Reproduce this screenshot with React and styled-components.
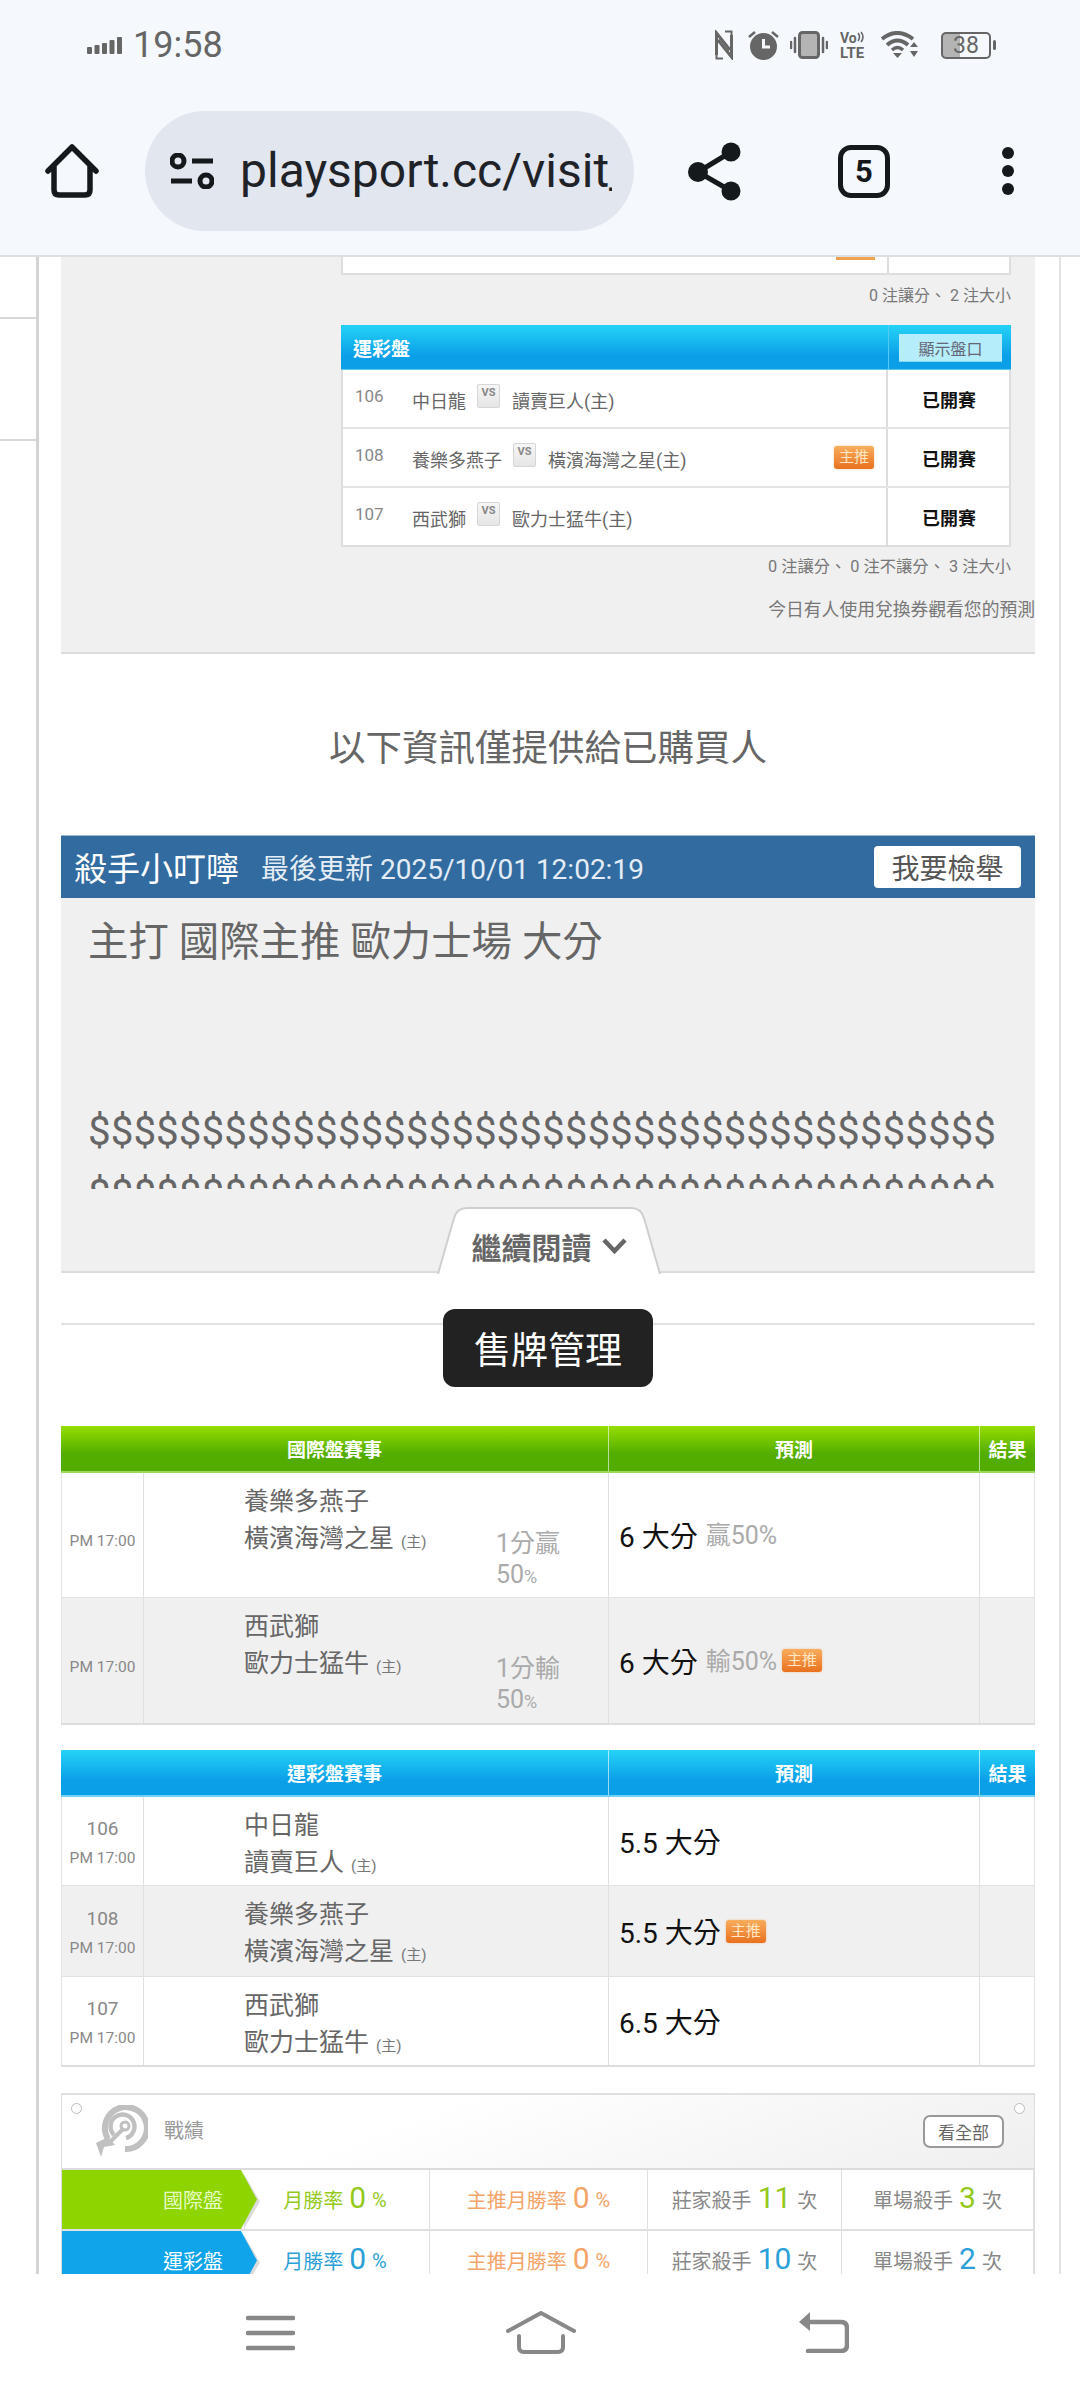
import React from 'react'
import styled, { createGlobalStyle } from 'styled-components'

const GlobalStyle = createGlobalStyle`
  html, body { margin: 0; padding: 0; background: #fff; overflow: hidden; }
  * { box-sizing: border-box; }
  body { font-family: Roboto, "Noto Sans CJK TC", sans-serif; }
`

const Screen = styled.div`
  width: 1080px;
  height: 2400px;
  display: flex;
  flex-direction: column;
  overflow: hidden;
  background: #fff;
`

/* browser chrome */
const Chrome = styled.header`
  height: 257px;
  flex: none;
  background: #f5f9fe;
  border-bottom: 2px solid #dcdfe3;
`
const StatusBar = styled.div`
  height: 90px;
  padding: 0 89px 0 87px;
  display: flex;
  align-items: center;
  color: #666;
`
const Time = styled.span`
  font-size: 36px;
  margin-left: 11px;
  line-height: 1;
`
const StatusIcons = styled.div`
  margin-left: auto;
  display: flex;
  align-items: center;
`
const Battery = styled.div`
  width: 50px;
  height: 27px;
  margin-left: 23px;
  border: 2.5px solid #666;
  border-radius: 5px;
  position: relative;
  display: flex;
  align-items: center;
  justify-content: center;
  font-size: 23px;
  background: linear-gradient(90deg, #b4b4b4 0 36%, transparent 36%);
  &::after {
    content: "";
    position: absolute;
    right: -7px;
    top: 6px;
    width: 3px;
    height: 10px;
    border-radius: 2px;
    background: #666;
  }
`
const Toolbar = styled.div`
  margin-top: 21px;
  height: 120px;
  padding-left: 45px;
  display: flex;
  align-items: center;
`
const UrlPill = styled.div`
  width: 489px;
  height: 120px;
  margin-left: 46px;
  margin-right: 54px;
  border-radius: 60px;
  background: #e1e6ef;
  padding-left: 25px;
  display: flex;
  align-items: center;
  gap: 26px;
`
const UrlText = styled.div`
  width: 372px;
  overflow: hidden;
  white-space: nowrap;
  font-size: 48px;
  line-height: 64px;
  color: #1f2328;
`
const TabCount = styled.div`
  width: 52px;
  height: 53px;
  margin-left: 97px;
  margin-right: 112px;
  border: 5px solid #15191c;
  border-radius: 13px;
  display: flex;
  align-items: center;
  justify-content: center;
  font-size: 31px;
  font-weight: 700;
  color: #15191c;
`
const Kebab = styled.div`
  width: 12px;
  display: flex;
  flex-direction: column;
  gap: 6px;
  i {
    display: block;
    width: 12px;
    height: 12px;
    border-radius: 50%;
    background: #15191c;
  }
`

/* page */
const PageArea = styled.main`
  flex: 1;
  min-height: 0;
  display: flex;
  overflow: hidden;
`
const LeftStub = styled.aside`
  width: 36px;
  flex: none;
`
const StubRow = styled.div`
  height: ${(p) => p.$h}px;
  border-bottom: 2px solid #d8d8d8;
`
const Content = styled.div`
  width: 1025px;
  flex: none;
  padding: 0 24px 0 22px;
  border-left: 3px solid #d4d4d4;
  border-right: 2px solid #e2e2e2;
  height: 100%;
  overflow: hidden;
`
const GrayPanel = styled.section`
  height: 397px;
  background: #f0f0f0;
  border-bottom: 2px solid #dcdcdc;
  padding-right: 24px;
  display: flex;
  flex-direction: column;
  align-items: flex-end;
`
const Remnant = styled.div`
  width: 670px;
  height: 18px;
  background: #fff;
  border: 2px solid #ddd;
  border-top: none;
  display: grid;
  grid-template-columns: 546px 1fr;
`
const RemnantLeft = styled.div`
  border-right: 2px solid #ddd;
  display: flex;
  justify-content: flex-end;
  padding-right: 12px;
  i {
    display: block;
    width: 39px;
    height: 3px;
    background: #f2a14e;
  }
`
const Note = styled.div`
  height: ${(p) => p.$h}px;
  margin-bottom: ${(p) => p.$mb || 0}px;
  display: flex;
  align-items: center;
  font-size: ${(p) => p.$size}px;
  color: #777;
  white-space: pre;
  ${(p) => p.$flush && 'margin-right: -24px;'}
`
const OddsTable = styled.div`
  width: 670px;
  background: #fff;
  border: 2px solid #ddd;
  border-top: none;
`
const OddsHead = styled.div`
  height: 45px;
  margin: 0 -2px;
  display: grid;
  grid-template-columns: 547px 1fr;
  background: linear-gradient(#25d3f6, #0b9fe8 70%);
  border-bottom: 1px solid #5cc8f0;
`
const OddsTitle = styled.div`
  padding-left: 12px;
  display: flex;
  align-items: center;
  font-size: 19px;
  font-weight: 700;
  color: #fff;
`
const OddsHeadRight = styled.div`
  border-left: 1px solid #55c9f2;
  padding: 9px 0 0 10px;
`
const ShowOdds = styled.div`
  width: 103px;
  height: 28px;
  background: #b5edfa;
  border-bottom: 1px solid #7fd9ef;
  color: #667;
  font-size: 16px;
  display: flex;
  align-items: center;
  justify-content: center;
`
const OddsRow = styled.div`
  height: ${(p) => (p.$last ? 57 : 59)}px;
  display: grid;
  grid-template-columns: 545px 1fr;
  border-bottom: ${(p) => (p.$last ? 'none' : '2px solid #e4e4e4')};
`
const OddsGame = styled.div`
  padding: 0 12px;
  border-right: 2px solid #ddd;
  display: flex;
  align-items: center;
  color: #666;
  font-size: 18px;
`
const OddsNo = styled.span`
  width: 57px;
  font-size: 17px;
  color: #888;
  margin-bottom: 6px;
`
const OddsTeam = styled.span`
  padding-top: 3px;
`
const VsMark = styled.span`
  width: 23px;
  height: 24px;
  margin: 0 12px 6px 11px;
  background: linear-gradient(#f6f6f6, #e6e6e6);
  border: 1px solid #d6d6d6;
  border-radius: 2px;
  color: #888;
  font-size: 11px;
  font-weight: 700;
  text-align: center;
  line-height: 15px;
`
const OddsState = styled.div`
  display: flex;
  align-items: center;
  justify-content: center;
  padding-left: 1px;
  font-size: 18px;
  font-weight: 700;
  color: #111;
`
const MainPick = styled.span`
  width: 40px;
  height: 23px;
  flex: none;
  margin-left: ${(p) => p.$ml || '8px'};
  background: linear-gradient(#f8ad5e, #e9711f);
  border-radius: 3px;
  box-shadow: 0 0 2px rgba(240, 150, 70, 0.6);
  color: #ffe6c4;
  font-size: 15px;
  line-height: 23px;
  text-align: center;
  font-weight: 400;
`
const BuyersTitle = styled.h2`
  margin: 0;
  height: 181px;
  padding-top: 2px;
  display: flex;
  align-items: center;
  justify-content: center;
  font-size: 36.5px;
  font-weight: 400;
  color: #666;
`

/* article */
const Article = styled.article`
  position: relative;
`
const ArticleHead = styled.div`
  height: 63px;
  background: #316b9f;
  border-top: 1px solid #9fbcd4;
  padding: 0 14px 0 13px;
  display: flex;
  align-items: center;
  color: #fff;
`
const Author = styled.span`
  font-size: 33px;
`
const Updated = styled.span`
  margin-left: 22px;
  font-size: 28px;
  color: #e4edf5;
`
const ReportBtn = styled.div`
  margin-left: auto;
  width: 147px;
  height: 42px;
  background: #fff;
  border-radius: 4px;
  color: #555;
  font-size: 28px;
  display: flex;
  align-items: center;
  justify-content: center;
`
const ArticleBody = styled.div`
  height: 375px;
  background: #f0f0f0;
  border-bottom: 2px solid #dcdcdc;
  padding: 13px 23px 0 27px;
`
const ArticleText = styled.div`
  height: 278px;
  overflow: hidden;
  font-size: 40.4px;
  line-height: 63px;
  color: #666;
  white-space: nowrap;
`
const ReadMore = styled.div`
  position: absolute;
  left: 376px;
  bottom: -1px;
  width: 224px;
  height: 67px;
  display: flex;
  align-items: center;
  justify-content: center;
  gap: 10px;
  padding-top: 11px;
  font-size: 30px;
  font-weight: 700;
  color: #666;
  svg.shape {
    position: absolute;
    inset: 0;
  }
  span, svg.chev {
    position: relative;
  }
`

/* sale button */
const SaleSection = styled.div`
  height: 153px;
  padding-top: 36px;
  display: flex;
  justify-content: center;
  align-items: flex-start;
  position: relative;
  &::before {
    content: "";
    position: absolute;
    left: 0;
    right: 0;
    top: 50px;
    height: 2px;
    background: #e2e2e2;
  }
`
const SaleBtn = styled.div`
  position: relative;
  width: 210px;
  height: 78px;
  background: #222;
  border-radius: 12px;
  color: #fff;
  font-size: 37px;
  display: flex;
  align-items: center;
  justify-content: center;
`

/* pick tables */
const COLS = '82px 465px 371px 56px'
const PickTable = styled.div`
  margin-bottom: ${(p) => p.$mb}px;
  border-bottom: 2px solid #dedede;
`
const PickHead = styled.div`
  height: 47px;
  display: grid;
  grid-template-columns: ${COLS};
  background: ${(p) =>
    p.$tone === 'green'
      ? 'linear-gradient(#96de00, #52ad00 62%)'
      : 'linear-gradient(#25d3f6, #0b9fe8 68%)'};
  border-bottom: 2px solid ${(p) => (p.$tone === 'green' ? '#9bd85c' : '#6fd0f4')};
  color: #fff;
  font-size: 19px;
  font-weight: 700;
`
const HeadCell = styled.div`
  display: flex;
  align-items: center;
  justify-content: center;
  ${(p) => p.$span && 'grid-column: span 2;'}
  ${(p) => p.$line && `border-left: 1px solid rgba(255, 255, 255, 0.6);`}
`
const PickRow = styled.div`
  height: ${(p) => p.$h}px;
  display: grid;
  grid-template-columns: ${COLS};
  background: ${(p) => (p.$alt ? '#f0f0f0' : '#fff')};
  border-bottom: ${(p) => (p.$last ? 'none' : '1px solid #e2e2e2')};
  border-left: 1px solid #e2e2e2;
  border-right: 1px solid #e2e2e2;
`
const TimeCell = styled.div`
  display: flex;
  flex-direction: column;
  align-items: center;
  justify-content: center;
  padding-top: ${(p) => (p.$withNo ? 4 : 12)}px;
  border-right: 1px solid #e0e0e0;
  color: #888;
  font-size: 15.5px;
  line-height: 28px;
`
const GameNo = styled.span`
  font-size: 19px;
  line-height: 30px;
`
const GameCell = styled.div`
  padding: 10px 0 0 100px;
  display: flex;
  align-items: flex-start;
  border-right: 1px solid #e0e0e0;
`
const Teams = styled.div`
  width: 252px;
  color: #666;
  font-size: 25px;
  line-height: 37px;
  small {
    font-size: 15px;
    color: #777;
    margin-left: 7px;
  }
`
const Result = styled.div`
  width: 80px;
  margin-top: 45px;
  color: #aaa;
  font-size: 25px;
  line-height: 31px;
  small {
    font-size: 18px;
  }
`
const PredCell = styled.div`
  padding-left: 10px;
  display: flex;
  align-items: center;
  border-right: 1px solid #e0e0e0;
  font-size: 28px;
  color: #111;
`
const PredNote = styled.span`
  margin-left: 8px;
  margin-bottom: 4px;
  font-size: 25px;
  color: #aaa;
`

/* stats */
const Stats = styled.section`
  margin-top: 1px;
  border-top: 2px solid #e0e0e0;
  border-left: 1px solid #ddd;
  border-right: 1px solid #ddd;
`
const StatsHead = styled.div`
  height: 75px;
  padding: 0 30px 0 32px;
  display: flex;
  align-items: center;
  background: linear-gradient(160deg, #fff 35%, #efefef);
  border-bottom: 2px solid #dcdcdc;
  position: relative;
  &::before, &::after {
    content: "";
    position: absolute;
    top: 8px;
    width: 9px;
    height: 9px;
    border: 1px solid #bbb;
    border-radius: 50%;
    background: #fff;
  }
  &::before { left: 9px; }
  &::after { right: 9px; }
`
const StatsTitle = styled.span`
  margin-left: 16px;
  margin-bottom: 4px;
  font-size: 20px;
  color: #999;
`
const SeeAll = styled.div`
  margin-left: auto;
  width: 81px;
  height: 33px;
  border: 2px solid #999;
  border-radius: 7px;
  background: #fff;
  color: #666;
  font-size: 17px;
  display: flex;
  align-items: center;
  justify-content: center;
`
const StatRow = styled.div`
  height: 61px;
  display: grid;
  grid-template-columns: 179px 189px 218px 194px 1fr;
  border-bottom: 2px solid #e0e0e0;
`
const StatLabel = styled.div`
  position: relative;
  background: ${(p) => p.$color};
  color: ${(p) => p.$text};
  font-size: 20px;
  display: flex;
  align-items: center;
  justify-content: flex-end;
  padding-right: 18px;
  &::before, &::after {
    content: "";
    position: absolute;
    left: 100%;
    top: 0;
    bottom: 0;
    width: 16px;
    clip-path: polygon(0 0, 100% 50%, 0 100%);
  }
  &::before {
    left: calc(100% + 3px);
    top: 4px;
    background: #dcdcdc;
  }
  &::after {
    background: ${(p) => p.$color};
  }
`
const StatCell = styled.div`
  display: flex;
  align-items: center;
  justify-content: center;
  gap: 6px;
  white-space: nowrap;
  border-right: 1px solid #e0e0e0;
  font-size: 20px;
  color: ${(p) => p.$color};
`
const StatNum = styled.span`
  font-size: 30px;
  color: ${(p) => p.$color};
  margin-bottom: 4px;
`

const BottomNav = styled.nav`
  height: 126px;
  flex: none;
  background: #fff;
  display: flex;
  align-items: flex-start;
  padding: 41px 0 0 246px;
  position: relative;
`
const NavSlot = styled.div`
  margin-left: ${(p) => p.$ml || 0}px;
  display: flex;
`

const Signal = () => (
  <svg width="35" height="18" viewBox="0 0 35 18" fill="#666">
    <rect x="0" y="11" width="5" height="7" rx="1" />
    <rect x="7.5" y="9" width="5" height="9" rx="1" />
    <rect x="15" y="7" width="5" height="11" rx="1" />
    <rect x="22.5" y="4" width="5" height="14" rx="1" />
    <rect x="30" y="1" width="5" height="17" rx="1" />
  </svg>
)
const NfcIcon = () => (
  <svg width="18" height="30" viewBox="0 0 18 30" fill="none" stroke="#666" strokeWidth="3">
    <path d="M1.5 25 V3 L15 20 M16.5 5 V27 L3 10" />
    <path d="M10 1.5 H16.5 V8 M1.5 22 V28.5 H8" strokeWidth="2" />
  </svg>
)
const AlarmIcon = () => (
  <svg width="31" height="30" viewBox="0 0 31 30" style={{ marginLeft: 15 }}>
    <circle cx="15.5" cy="16.5" r="13.5" fill="#666" />
    <path d="M15.5 9 V17 H22" fill="none" stroke="#f5f9fe" strokeWidth="3" />
    <path d="M1 7 L7 2 M30 7 L24 2" stroke="#666" strokeWidth="2.5" />
  </svg>
)
const VibrateIcon = () => (
  <svg width="38" height="28" viewBox="0 0 38 28" style={{ marginLeft: 11 }}>
    <rect x="9.5" y="1.5" width="19" height="25" rx="3" fill="#b4b4b4" stroke="#666" strokeWidth="3" />
    <path d="M5 7 V21 M1 11 V17 M33 7 V21 M37 11 V17" stroke="#666" strokeWidth="2.5" strokeLinecap="round" />
  </svg>
)
const VolteIcon = () => (
  <svg width="27" height="28" viewBox="0 0 27 28" style={{ marginLeft: 12, overflow: 'visible' }} fontFamily="Roboto, sans-serif" fontWeight="700" fill="#666">
    <text x="0" y="12" fontSize="14">Vo</text>
    <path d="M18 2 Q21 6 18 10 M21 1 Q25 6 21 11" fill="none" stroke="#666" strokeWidth="1.6" />
    <text x="0" y="27" fontSize="15">LTE</text>
  </svg>
)
const WifiIcon = () => (
  <svg width="37" height="28" viewBox="0 0 37 28" style={{ marginLeft: 14 }} fill="none" stroke="#666">
    <path d="M1 8 Q16 -4 32 8" strokeWidth="4" />
    <path d="M6 14 Q16.5 5 27 14" strokeWidth="4" />
    <path d="M11 19 Q16.5 14 22 19" strokeWidth="3.5" />
    <path d="M12 22 H21 L16.5 27 Z M29 16 H37 L33 11 Z M29 20 H37 L33 26 Z" fill="#666" stroke="none" />
  </svg>
)
const HomeIcon = () => (
  <svg width="54" height="54" viewBox="0 0 54 54" fill="none" stroke="#15191c" strokeWidth="5.5" strokeLinejoin="round" strokeLinecap="round" style={{ flex: 'none' }}>
    <path d="M3 27 L27 3 L51 27 M9 22 V46 Q9 51 14 51 H40 Q45 51 45 46 V22" />
  </svg>
)
const TuneIcon = () => (
  <svg width="44" height="36" viewBox="0 0 44 36" fill="none" stroke="#15191c" strokeWidth="5" style={{ flex: 'none' }}>
    <circle cx="8" cy="8" r="6" />
    <circle cx="36" cy="28" r="6" />
    <path d="M22 8 H43 M1 28 H22" />
  </svg>
)
const ShareIcon = () => (
  <svg width="53" height="59" viewBox="0 0 53 59" style={{ flex: 'none' }}>
    <path d="M43 10 L10 30 L43 49" fill="none" stroke="#15191c" strokeWidth="5" />
    <circle cx="43" cy="10" r="9.5" fill="#15191c" />
    <circle cx="10" cy="30" r="10" fill="#15191c" />
    <circle cx="43" cy="49" r="9.5" fill="#15191c" />
  </svg>
)
const TargetIcon = () => (
  <svg width="54" height="54" viewBox="0 0 54 54" fill="none" stroke="#c0c0c0" style={{ flex: 'none' }}>
    <path d="M14 34 A21 21 0 1 1 31 44" strokeWidth="6" />
    <path d="M20 30 A12 12 0 1 1 32 33" strokeWidth="4.5" />
    <circle cx="31" cy="21" r="4" strokeWidth="3" />
    <path d="M30 23 L15 38" strokeWidth="4" />
    <path d="M2 38 L14 32 L21 40 L10 42 L7 52 Z" fill="#c0c0c0" stroke="none" />
  </svg>
)
const TabShape = () => (
  <svg className="shape" width="224" height="67" viewBox="0 0 224 67" fill="#fff">
    <path d="M1 67 L17 11 Q20 1 30 1 L194 1 Q204 1 207 11 L223 67 Z" stroke="none" />
    <path d="M1 67 L17 11 Q20 1 30 1 L194 1 Q204 1 207 11 L223 67" fill="none" stroke="#cfcfcf" strokeWidth="2" />
  </svg>
)

const oddsRows = [
  { no: 106, away: '中日龍', home: '讀賣巨人(主)' },
  { no: 108, away: '養樂多燕子', home: '橫濱海灣之星(主)', main: true },
  { no: 107, away: '西武獅', home: '歐力士猛牛(主)' },
]

const intlRows = [
  { away: '養樂多燕子', home: '橫濱海灣之星', result: '1分贏', pred: '6 大分', note: '贏50%' },
  { away: '西武獅', home: '歐力士猛牛', result: '1分輸', pred: '6 大分', note: '輸50%', main: true, alt: true, last: true },
]

const sportRows = [
  { no: 106, away: '中日龍', home: '讀賣巨人', pred: '5.5 大分', h: 89 },
  { no: 108, away: '養樂多燕子', home: '橫濱海灣之星', pred: '5.5 大分', main: true, alt: true, h: 91 },
  { no: 107, away: '西武獅', home: '歐力士猛牛', pred: '6.5 大分', last: true, h: 88 },
]

const GREEN = '#94c91c'
const BLUE = '#2b9fd8'
const ORANGE = '#f4a468'
const GREY = '#888'
const DOLLARS = '$'.repeat(40)

const StatLine = ({ label, color, labelBg, labelText, rate, mainRate, bank, single }) => (
  <StatRow>
    <StatLabel $color={labelBg} $text={labelText}>{label}</StatLabel>
    <StatCell $color={color}>月勝率 <StatNum $color={color}>{rate}</StatNum> %</StatCell>
    <StatCell $color={ORANGE}>主推月勝率 <StatNum $color={ORANGE}>{mainRate}</StatNum> %</StatCell>
    <StatCell $color={GREY}>莊家殺手 <StatNum $color={color}>{bank}</StatNum> 次</StatCell>
    <StatCell $color={GREY}>單場殺手 <StatNum $color={color}>{single}</StatNum> 次</StatCell>
  </StatRow>
)

const App = () => (
  <Screen>
    <GlobalStyle />
    <Chrome>
      <StatusBar>
        <Signal />
        <Time>19:58</Time>
        <StatusIcons>
          <NfcIcon />
          <AlarmIcon />
          <VibrateIcon />
          <VolteIcon />
          <WifiIcon />
          <Battery>38</Battery>
        </StatusIcons>
      </StatusBar>
      <Toolbar>
        <HomeIcon />
        <UrlPill>
          <TuneIcon />
          <UrlText>playsport.cc/visit_member</UrlText>
        </UrlPill>
        <ShareIcon />
        <TabCount>5</TabCount>
        <Kebab><i /><i /><i /></Kebab>
      </Toolbar>
    </Chrome>

    <PageArea>
      <LeftStub>
        <StubRow $h={62} />
        <StubRow $h={122} />
      </LeftStub>
      <Content>
        <GrayPanel>
          <Remnant>
            <RemnantLeft><i /></RemnantLeft>
          </Remnant>
          <Note $h={38} $mb={12} $size={16}>0 注讓分、 2 注大小</Note>
          <OddsTable>
            <OddsHead>
              <OddsTitle>運彩盤</OddsTitle>
              <OddsHeadRight><ShowOdds>顯示盤口</ShowOdds></OddsHeadRight>
            </OddsHead>
            {oddsRows.map((r, i) => (
              <OddsRow key={r.no} $last={i === 2}>
                <OddsGame>
                  <OddsNo>{r.no}</OddsNo>
                  <OddsTeam>{r.away}</OddsTeam>
                  <VsMark>VS</VsMark>
                  <OddsTeam>{r.home}</OddsTeam>
                  {r.main && <MainPick $ml="auto">主推</MainPick>}
                </OddsGame>
                <OddsState>已開賽</OddsState>
              </OddsRow>
            ))}
          </OddsTable>
          <Note $h={36} $size={16.3}>0 注讓分、 0 注不讓分、 3 注大小</Note>
          <Note $h={50} $size={17.8} $flush>今日有人使用兌換券觀看您的預測</Note>
        </GrayPanel>

        <BuyersTitle>以下資訊僅提供給已購買人</BuyersTitle>

        <Article>
          <ArticleHead>
            <Author>殺手小叮嚀</Author>
            <Updated>最後更新 2025/10/01 12:02:19</Updated>
            <ReportBtn>我要檢舉</ReportBtn>
          </ArticleHead>
          <ArticleBody>
            <ArticleText>
              主打 國際主推 歐力士場 大分
              <br />
              <br />
              <br />
              {DOLLARS}
              <br />
              {DOLLARS}
            </ArticleText>
          </ArticleBody>
          <ReadMore>
            <TabShape />
            <span>繼續閱讀</span>
            <svg className="chev" width="25" height="16" viewBox="0 0 25 16" fill="none" stroke="#666" strokeWidth="4.5">
              <path d="M2 2 L12.5 13 L23 2" />
            </svg>
          </ReadMore>
        </Article>

        <SaleSection>
          <SaleBtn>售牌管理</SaleBtn>
        </SaleSection>

        <PickTable $mb={25}>
          <PickHead $tone="green">
            <HeadCell $span>國際盤賽事</HeadCell>
            <HeadCell $line>預測</HeadCell>
            <HeadCell $line>結果</HeadCell>
          </PickHead>
          {intlRows.map((r) => (
            <PickRow key={r.away} $h={125} $alt={r.alt} $last={r.last}>
              <TimeCell>PM 17:00</TimeCell>
              <GameCell>
                <Teams>
                  {r.away}
                  <br />
                  {r.home}<small>(主)</small>
                </Teams>
                <Result>{r.result} 50<small>%</small></Result>
              </GameCell>
              <PredCell>
                {r.pred}
                <PredNote>{r.note}</PredNote>
                {r.main && <MainPick $ml="5px">主推</MainPick>}
              </PredCell>
              <div />
            </PickRow>
          ))}
        </PickTable>

        <PickTable $mb={26}>
          <PickHead $tone="blue">
            <HeadCell $span>運彩盤賽事</HeadCell>
            <HeadCell $line>預測</HeadCell>
            <HeadCell $line>結果</HeadCell>
          </PickHead>
          {sportRows.map((r) => (
            <PickRow key={r.no} $h={r.h} $alt={r.alt} $last={r.last}>
              <TimeCell $withNo>
                <GameNo>{r.no}</GameNo>
                PM 17:00
              </TimeCell>
              <GameCell>
                <Teams>
                  {r.away}
                  <br />
                  {r.home}<small>(主)</small>
                </Teams>
              </GameCell>
              <PredCell>
                {r.pred}
                {r.main && <MainPick $ml="5px">主推</MainPick>}
              </PredCell>
              <div />
            </PickRow>
          ))}
        </PickTable>

        <Stats>
          <StatsHead>
            <TargetIcon />
            <StatsTitle>戰績</StatsTitle>
            <SeeAll>看全部</SeeAll>
          </StatsHead>
          <StatLine label="國際盤" color={GREEN} labelBg="#8ed500" labelText="#e6fbc0" rate="0" mainRate="0" bank="11" single="3" />
          <StatLine label="運彩盤" color={BLUE} labelBg="#10a4ea" labelText="#fff" rate="0" mainRate="0" bank="10" single="2" />
        </Stats>
      </Content>
    </PageArea>

    <BottomNav>
      <NavSlot>
        <svg width="49" height="36" viewBox="0 0 49 36" stroke="#888" strokeWidth="4.5" strokeLinecap="round">
          <path d="M2 3 H47 M2 18 H47 M2 33 H47" />
        </svg>
      </NavSlot>
      <NavSlot $ml={211}>
        <svg width="70" height="43" viewBox="0 0 70 43" fill="none" stroke="#888" strokeWidth="4" strokeLinejoin="round" strokeLinecap="round" style={{ marginTop: -4 }}>
          <path d="M2 20 L35 2 L68 20 M13 25 V36 Q13 41 18 41 H52 Q57 41 57 36 V25" />
        </svg>
      </NavSlot>
      <NavSlot $ml={222}>
        <svg width="51" height="42" viewBox="0 0 51 42" fill="none" stroke="#888" strokeWidth="4.5" strokeLinecap="round" style={{ marginTop: -4 }}>
          <path d="M12 11 H43 Q49 11 49 17 V34 Q49 40 43 40 H10" />
          <path d="M1 11 L12 1 V20 Z" fill="#888" stroke="none" />
        </svg>
      </NavSlot>
    </BottomNav>
  </Screen>
)

export default App
